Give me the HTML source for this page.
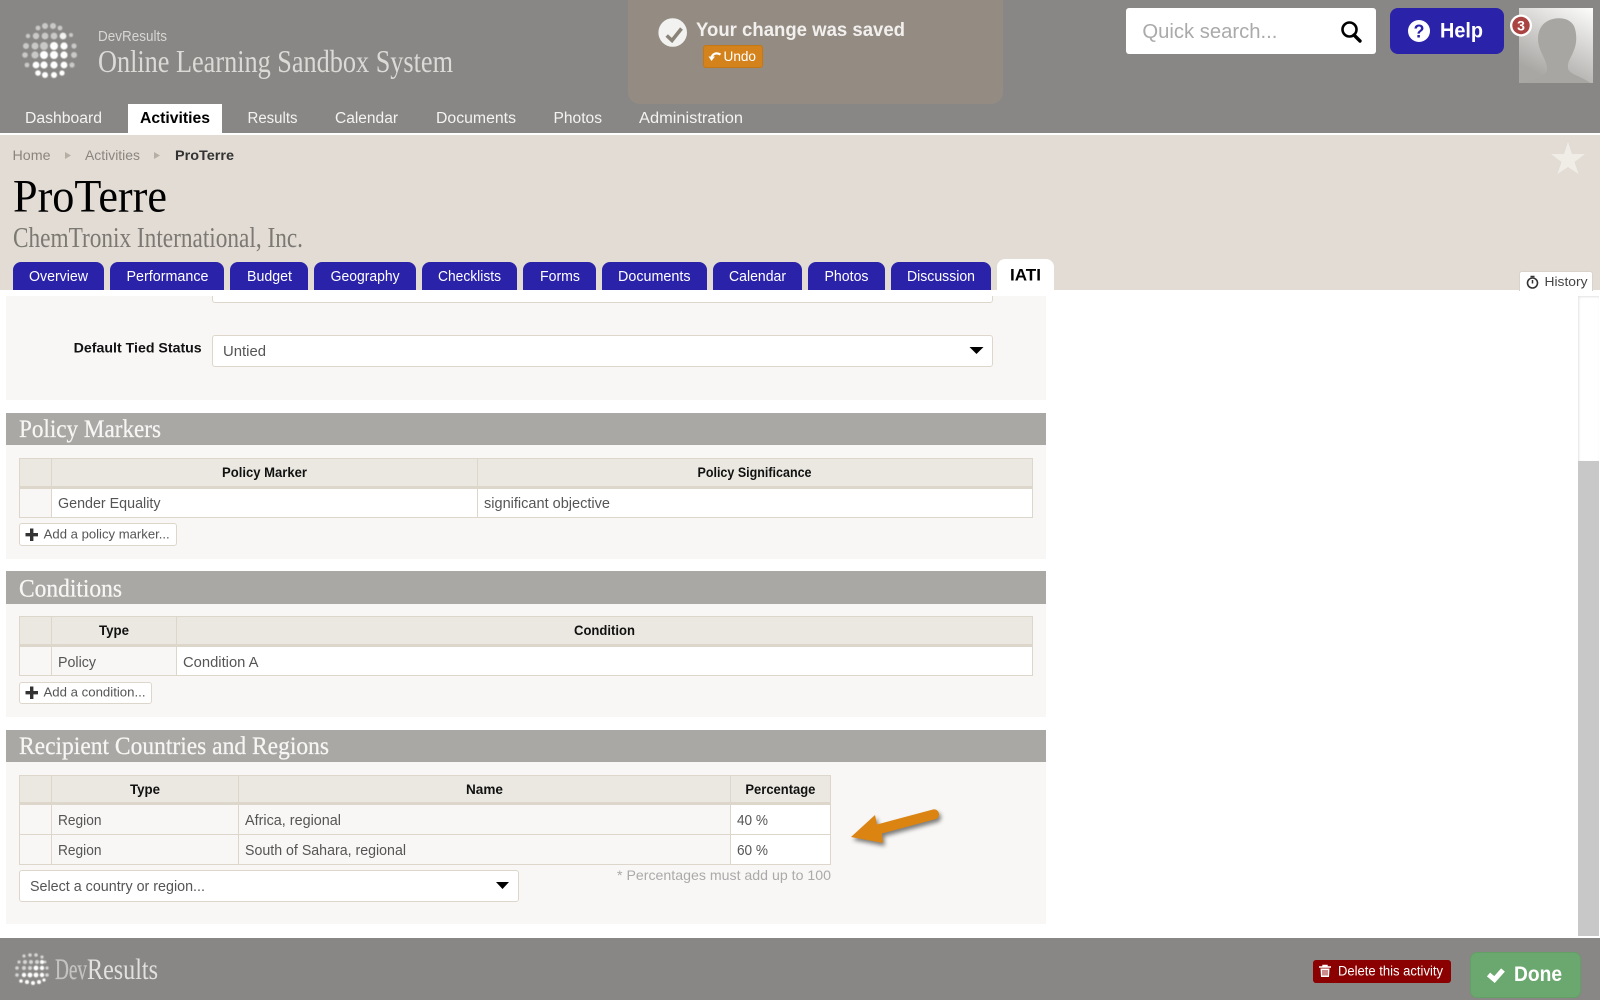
<!DOCTYPE html>
<html lang="en">
<head>
<meta charset="utf-8">
<title>ProTerre - DevResults</title>
<style>
html,body{margin:0;padding:0;background:#fff;}
body{position:relative;width:1601px;height:1000px;overflow:hidden;font-family:"Liberation Sans",sans-serif;}
.b{position:absolute;box-sizing:border-box;}
svg{position:absolute;left:0;top:0;}
text{font-family:"Liberation Sans",sans-serif;white-space:pre;}
.s{font-family:"Liberation Serif",serif;}
.w{font-weight:bold;}
.nav{font-size:15.5px;fill:#f4f3f1;}
.tab{font-size:15px;fill:#fff;}
.crumb{font-size:14px;fill:#8a857e;}
.sec{font-family:"Liberation Serif",serif;font-size:25px;fill:#f7f6f4;stroke:#f7f6f4;stroke-width:.25px;}
.th{font-size:13.5px;font-weight:bold;fill:#111;}
.td{font-size:14.5px;fill:#555;}
.add{font-size:13px;fill:#555;}
.line{background:#ddd6cb;}
</style>
</head>
<body>
<!-- header -->
<div class="b" style="left:0;top:0;width:1600px;height:133px;background:#888785"></div>
<div class="b" style="left:628px;top:0;width:375px;height:104px;background:#948c82;border-radius:0 0 12px 12px"></div>
<div class="b" style="left:128px;top:104px;width:94px;height:31px;background:#fff"></div>
<div class="b" style="left:1126px;top:8px;width:250px;height:46px;background:#fff;border-radius:3px"></div>
<div class="b" style="left:1390px;top:8px;width:114px;height:46px;background:#2a22a8;border-radius:8px"></div>
<div class="b" style="left:703px;top:45px;width:60px;height:23px;background:#d4831c;border:1px solid #c47815;border-radius:3px"></div>
<!-- sub header -->
<div class="b" style="left:0;top:135px;width:1600px;height:155px;background:#e2dcd5"></div>
<div class="b" style="left:13px;top:262px;width:91px;height:28px;background:#2a22a8;border-radius:8px 8px 0 0"></div>
<div class="b" style="left:110px;top:262px;width:114px;height:28px;background:#2a22a8;border-radius:8px 8px 0 0"></div>
<div class="b" style="left:230px;top:262px;width:78px;height:28px;background:#2a22a8;border-radius:8px 8px 0 0"></div>
<div class="b" style="left:314px;top:262px;width:102px;height:28px;background:#2a22a8;border-radius:8px 8px 0 0"></div>
<div class="b" style="left:422px;top:262px;width:95px;height:28px;background:#2a22a8;border-radius:8px 8px 0 0"></div>
<div class="b" style="left:523px;top:262px;width:73px;height:28px;background:#2a22a8;border-radius:8px 8px 0 0"></div>
<div class="b" style="left:602px;top:262px;width:105px;height:28px;background:#2a22a8;border-radius:8px 8px 0 0"></div>
<div class="b" style="left:713px;top:262px;width:89px;height:28px;background:#2a22a8;border-radius:8px 8px 0 0"></div>
<div class="b" style="left:808px;top:262px;width:77px;height:28px;background:#2a22a8;border-radius:8px 8px 0 0"></div>
<div class="b" style="left:891px;top:262px;width:100px;height:28px;background:#2a22a8;border-radius:8px 8px 0 0"></div>
<div class="b" style="left:997px;top:259px;width:57px;height:31px;background:#fff;border-radius:8px 8px 0 0"></div>
<div class="b" style="left:1519px;top:271px;width:74px;height:20px;background:#fff;border:1px solid #d8d3cb;border-bottom:0;border-radius:3px 3px 0 0"></div>
<!-- panels -->
<div class="b" style="left:6px;top:296px;width:1040px;height:104px;background:#f8f7f5"></div>
<div class="b" style="left:212px;top:290px;width:781px;height:13px;background:#fff;border:1px solid #ddd6cb;border-radius:0 0 3px 3px"></div>
<div class="b" style="left:0;top:290px;width:1060px;height:6px;background:#fff"></div>
<div class="b" style="left:212px;top:335px;width:781px;height:32px;background:#fff;border:1px solid #ddd6cb;border-radius:3px"></div>

<div class="b" style="left:6px;top:413px;width:1040px;height:32px;background:#a9a8a5"></div>
<div class="b" style="left:6px;top:445px;width:1040px;height:114px;background:#f8f7f5"></div>
<div class="b" style="left:19px;top:458px;width:1014px;height:31px;background:#ebe8e1;border:1px solid #ddd6cb;border-bottom:3px solid #ddd6cb"></div>
<div class="b" style="left:19px;top:489px;width:1014px;height:29px;background:#fff;border:1px solid #ddd6cb;border-top:0"></div>
<div class="b" style="left:20px;top:489px;width:31px;height:28px;background:#f8f7f5"></div>
<div class="b line" style="left:51px;top:458px;width:1px;height:59px"></div>
<div class="b line" style="left:477px;top:458px;width:1px;height:59px"></div>
<div class="b" style="left:19px;top:523px;width:158px;height:23px;background:#fff;border:1px solid #ddd6cb;border-radius:3px"></div>

<div class="b" style="left:6px;top:571px;width:1040px;height:33px;background:#a9a8a5"></div>
<div class="b" style="left:6px;top:604px;width:1040px;height:113px;background:#f8f7f5"></div>
<div class="b" style="left:19px;top:616px;width:1014px;height:31px;background:#ebe8e1;border:1px solid #ddd6cb;border-bottom:3px solid #ddd6cb"></div>
<div class="b" style="left:19px;top:647px;width:1014px;height:29px;background:#fff;border:1px solid #ddd6cb;border-top:0"></div>
<div class="b" style="left:20px;top:647px;width:31px;height:28px;background:#f8f7f5"></div>
<div class="b" style="left:52px;top:647px;width:124px;height:28px;background:#f8f7f5"></div>
<div class="b line" style="left:51px;top:616px;width:1px;height:59px"></div>
<div class="b line" style="left:176px;top:616px;width:1px;height:59px"></div>
<div class="b" style="left:19px;top:682px;width:133px;height:22px;background:#fff;border:1px solid #ddd6cb;border-radius:3px"></div>

<div class="b" style="left:6px;top:730px;width:1040px;height:32px;background:#a9a8a5"></div>
<div class="b" style="left:6px;top:762px;width:1040px;height:162px;background:#f8f7f5"></div>
<div class="b" style="left:19px;top:775px;width:812px;height:30px;background:#ebe8e1;border:1px solid #ddd6cb;border-bottom:3px solid #ddd6cb"></div>
<div class="b" style="left:19px;top:805px;width:812px;height:60px;border:1px solid #ddd6cb;border-top:0"></div>
<div class="b" style="left:731px;top:805px;width:99px;height:59px;background:#fff"></div>
<div class="b line" style="left:20px;top:834px;width:810px;height:1px"></div>
<div class="b line" style="left:51px;top:775px;width:1px;height:89px"></div>
<div class="b line" style="left:238px;top:775px;width:1px;height:89px"></div>
<div class="b line" style="left:730px;top:775px;width:1px;height:89px"></div>
<div class="b" style="left:19px;top:870px;width:500px;height:32px;background:#fff;border:1px solid #ddd6cb;border-radius:3px"></div>

<!-- scrollbar -->
<div class="b" style="left:1578px;top:296px;width:21px;height:640px;background:#c8c8c8"></div>
<div class="b" style="left:1578px;top:296px;width:21px;height:165px;background:#fff;box-shadow:inset 1px 1px 2px rgba(0,0,0,.12)"></div>

<!-- footer -->
<div class="b" style="left:0;top:938px;width:1600px;height:62px;background:#888785"></div>
<div class="b" style="left:1313px;top:960px;width:138px;height:23px;background:#8b0000;border-radius:3px"></div>
<div class="b" style="left:1470px;top:952px;width:111px;height:46px;background:#6ba86f;border:1px solid #62a066;border-radius:7px"></div>

<svg width="1601" height="1000" viewBox="0 0 1601 1000" xmlns="http://www.w3.org/2000/svg">
<defs>
<linearGradient id="av" x1="1" y1="0" x2="0.5" y2="1"><stop offset="0" stop-color="#fdfdfc"/><stop offset="1" stop-color="#a9a7a4"/></linearGradient>
<filter id="sh" x="-20%" y="-30%" width="140%" height="170%"><feGaussianBlur stdDeviation="2"/></filter>
<filter id="soft"><feGaussianBlur stdDeviation="0.4"/></filter>
</defs>

<!-- globe logo -->
<g fill="#fff" filter="url(#soft)">
<g opacity=".55"><circle cx="38" cy="28" r="2.4"/><circle cx="45" cy="26" r="3"/><circle cx="53" cy="26" r="3"/><circle cx="60" cy="28" r="2.4"/><circle cx="28" cy="36" r="2.2"/><circle cx="36" cy="36" r="3.2"/><circle cx="45" cy="36" r="3.4"/><circle cx="54" cy="36" r="3.4"/><circle cx="71" cy="35" r="2"/><circle cx="26" cy="46" r="3"/><circle cx="35" cy="46" r="3.5"/><circle cx="44" cy="46" r="4"/><circle cx="74" cy="46" r="2.6"/><circle cx="25" cy="55" r="2.8"/><circle cx="35" cy="55" r="3.6"/><circle cx="74" cy="55" r="3"/><circle cx="27" cy="65" r="2.4"/><circle cx="72" cy="65" r="2.6"/></g>
<circle cx="63" cy="36" r="3.4" opacity=".9"/>
<circle cx="54" cy="46" r="4"/><circle cx="64" cy="46" r="3.6"/>
<circle cx="44" cy="55" r="4"/><circle cx="54" cy="55" r="4"/><circle cx="64" cy="55" r="3.6"/>
<circle cx="36" cy="65" r="3.4"/><circle cx="44" cy="65" r="3.6"/><circle cx="54" cy="65" r="3.6"/><circle cx="64" cy="65" r="3.4"/>
<circle cx="38" cy="73" r="2.8"/><circle cx="45" cy="75" r="3"/><circle cx="54" cy="75" r="3"/><circle cx="62" cy="73" r="2.6"/>
</g>

<text x="98" y="41" font-size="14.5" fill="#d8d6d3" textLength="69" lengthAdjust="spacingAndGlyphs">DevResults</text>
<text class="s" x="98" y="72" font-size="32" fill="#dcdad6" textLength="355" lengthAdjust="spacingAndGlyphs">Online Learning Sandbox System</text>

<!-- nav -->
<text class="nav" x="25" y="123" textLength="77" lengthAdjust="spacingAndGlyphs">Dashboard</text>
<text class="nav w" x="140" y="123" style="fill:#000" textLength="70" lengthAdjust="spacingAndGlyphs">Activities</text>
<text class="nav" x="247.5" y="123" textLength="50" lengthAdjust="spacingAndGlyphs">Results</text>
<text class="nav" x="335" y="123" textLength="63" lengthAdjust="spacingAndGlyphs">Calendar</text>
<text class="nav" x="436" y="123" textLength="80" lengthAdjust="spacingAndGlyphs">Documents</text>
<text class="nav" x="553.5" y="123" textLength="48.5" lengthAdjust="spacingAndGlyphs">Photos</text>
<text class="nav" x="639" y="123" textLength="104" lengthAdjust="spacingAndGlyphs">Administration</text>

<!-- notification -->
<circle cx="672.7" cy="32.5" r="14.3" fill="#f2f2f0"/>
<path d="M666.7 35.5 L672 40.5 L681.5 28.5" fill="none" stroke="#8a8378" stroke-width="3.6"/>
<text class="w" x="696" y="36" font-size="19" fill="#f2f0ee" textLength="209" lengthAdjust="spacingAndGlyphs">Your change was saved</text>
<path d="M720.5 54.5 C716 52 712.5 54 711.5 57.5" fill="none" stroke="#fff" stroke-width="2.2"/>
<path d="M708.5 56.5 H715 L711.5 61 Z" fill="#fff"/>
<text x="723.5" y="61" font-size="13.5" fill="#fff" textLength="32.5" lengthAdjust="spacingAndGlyphs">Undo</text>

<!-- search/help/avatar -->
<text x="1142.4" y="38" font-size="20" fill="#aaa" textLength="135" lengthAdjust="spacingAndGlyphs">Quick search...</text>
<circle cx="1349.5" cy="29.5" r="7" fill="none" stroke="#000" stroke-width="2.6"/>
<path d="M1354 35 L1360 41" stroke="#000" stroke-width="3.4" stroke-linecap="round"/>
<circle cx="1419" cy="31" r="11" fill="#fff"/>
<text class="w" x="1419" y="37.5" font-size="18" fill="#2a22a8" text-anchor="middle">?</text>
<text class="w" x="1440" y="37.5" font-size="21" fill="#fff" textLength="43" lengthAdjust="spacingAndGlyphs">Help</text>
<rect x="1519" y="8" width="74" height="75" fill="url(#av)"/>
<path d="M1524 83 C1532 79 1546 77 1547 70 C1548 63 1541 54 1539 46 C1536 34 1540 22 1553 19 C1562 17 1570 19 1574 26 C1577 33 1577 43 1574 50 C1572 56 1567 62 1568 68 C1569 75 1582 76 1590 83 Z" fill="#a8a6a3"/>
<circle cx="1521" cy="25.5" r="11" fill="#fff"/>
<circle cx="1521" cy="25.5" r="8.7" fill="#a94442"/>
<text class="w" x="1521" y="30.5" font-size="14" fill="#fff" text-anchor="middle">3</text>

<!-- breadcrumb -->
<text class="crumb" x="12.5" y="160" textLength="38" lengthAdjust="spacingAndGlyphs">Home</text>
<path d="M65 152 L71 155.5 L65 159 Z" fill="#b5afa6"/>
<text class="crumb" x="85" y="160" textLength="55" lengthAdjust="spacingAndGlyphs">Activities</text>
<path d="M154 152 L160 155.5 L154 159 Z" fill="#b5afa6"/>
<text class="crumb w" x="175" y="160" style="fill:#333" textLength="59" lengthAdjust="spacingAndGlyphs">ProTerre</text>
<polygon points="1568,142 1572,154 1585,154 1574.5,162 1578.5,174 1568,167 1557.5,174 1561.5,162 1551,154 1564,154" fill="#f0ede7"/>

<text class="s" x="13" y="211.5" font-size="47" fill="#000" textLength="154" lengthAdjust="spacingAndGlyphs">ProTerre</text>
<text class="s" x="13" y="247" font-size="29" fill="#7c7872" textLength="290" lengthAdjust="spacingAndGlyphs">ChemTronix International, Inc.</text>

<!-- tabs -->
<text class="tab" x="29" y="281" textLength="59" lengthAdjust="spacingAndGlyphs">Overview</text>
<text class="tab" x="126.5" y="281" textLength="82" lengthAdjust="spacingAndGlyphs">Performance</text>
<text class="tab" x="247" y="281" textLength="45" lengthAdjust="spacingAndGlyphs">Budget</text>
<text class="tab" x="330.6" y="281" textLength="69" lengthAdjust="spacingAndGlyphs">Geography</text>
<text class="tab" x="438" y="281" textLength="63" lengthAdjust="spacingAndGlyphs">Checklists</text>
<text class="tab" x="540" y="281" textLength="40" lengthAdjust="spacingAndGlyphs">Forms</text>
<text class="tab" x="618" y="281" textLength="72.5" lengthAdjust="spacingAndGlyphs">Documents</text>
<text class="tab" x="729" y="281" textLength="57" lengthAdjust="spacingAndGlyphs">Calendar</text>
<text class="tab" x="824.5" y="281" textLength="44" lengthAdjust="spacingAndGlyphs">Photos</text>
<text class="tab" x="907" y="281" textLength="68" lengthAdjust="spacingAndGlyphs">Discussion</text>
<text class="w" x="1010" y="280.5" font-size="16.5" fill="#000" textLength="31" lengthAdjust="spacingAndGlyphs">IATI</text>

<!-- history -->
<circle cx="1532.5" cy="283" r="5" fill="none" stroke="#333" stroke-width="1.6"/>
<path d="M1530.5 276.5 H1534.5 M1532.5 280 V283.5" stroke="#333" stroke-width="1.5"/>
<text x="1544.5" y="286" font-size="13" fill="#444" textLength="43" lengthAdjust="spacingAndGlyphs">History</text>

<!-- default tied -->
<text class="w" x="73.7" y="352.5" font-size="14" fill="#111" textLength="128" lengthAdjust="spacingAndGlyphs">Default Tied Status</text>
<text class="td" x="223" y="356" textLength="43" lengthAdjust="spacingAndGlyphs">Untied</text>
<path d="M969.5 347 H983.5 L976.5 354 Z" fill="#000"/>

<!-- policy markers -->
<text class="sec" x="19" y="437" textLength="142" lengthAdjust="spacingAndGlyphs">Policy Markers</text>
<text class="th" x="222" y="477" textLength="85" lengthAdjust="spacingAndGlyphs">Policy Marker</text>
<text class="th" x="697.5" y="477" textLength="114" lengthAdjust="spacingAndGlyphs">Policy Significance</text>
<text class="td" x="58" y="508" textLength="102.5" lengthAdjust="spacingAndGlyphs">Gender Equality</text>
<text class="td" x="484" y="508" textLength="126" lengthAdjust="spacingAndGlyphs">significant objective</text>
<path d="M25.5 534.7 H38 M31.7 528.5 V541" stroke="#333" stroke-width="3.4"/>
<text class="add" x="43.7" y="538.7" textLength="126" lengthAdjust="spacingAndGlyphs">Add a policy marker...</text>

<!-- conditions -->
<text class="sec" x="19" y="596.5" textLength="103" lengthAdjust="spacingAndGlyphs">Conditions</text>
<text class="th" x="99" y="635" textLength="30" lengthAdjust="spacingAndGlyphs">Type</text>
<text class="th" x="574" y="635" textLength="61" lengthAdjust="spacingAndGlyphs">Condition</text>
<text class="td" x="58" y="667" textLength="38" lengthAdjust="spacingAndGlyphs">Policy</text>
<text class="td" x="183" y="667" textLength="75.5" lengthAdjust="spacingAndGlyphs">Condition A</text>
<path d="M25.5 692.7 H38 M31.7 686.5 V699" stroke="#333" stroke-width="3.4"/>
<text class="add" x="43.5" y="696.5" textLength="102" lengthAdjust="spacingAndGlyphs">Add a condition...</text>

<!-- recipient -->
<text class="sec" x="19" y="754" textLength="310" lengthAdjust="spacingAndGlyphs">Recipient Countries and Regions</text>
<text class="th" x="130" y="794" textLength="30" lengthAdjust="spacingAndGlyphs">Type</text>
<text class="th" x="466" y="794" textLength="37" lengthAdjust="spacingAndGlyphs">Name</text>
<text class="th" x="745.4" y="794" textLength="70" lengthAdjust="spacingAndGlyphs">Percentage</text>
<text class="td" x="58" y="825" textLength="43.5" lengthAdjust="spacingAndGlyphs">Region</text>
<text class="td" x="245" y="825" textLength="96" lengthAdjust="spacingAndGlyphs">Africa, regional</text>
<text class="td" x="737" y="825" textLength="31" lengthAdjust="spacingAndGlyphs">40 %</text>
<text class="td" x="58" y="855" textLength="43.5" lengthAdjust="spacingAndGlyphs">Region</text>
<text class="td" x="245" y="855" textLength="161" lengthAdjust="spacingAndGlyphs">South of Sahara, regional</text>
<text class="td" x="737" y="855" textLength="31" lengthAdjust="spacingAndGlyphs">60 %</text>
<text x="617" y="880" font-size="14" fill="#aaa" textLength="214" lengthAdjust="spacingAndGlyphs">* Percentages must add up to 100</text>
<text class="td" x="30" y="891" textLength="175" lengthAdjust="spacingAndGlyphs">Select a country or region...</text>
<path d="M496 882 H509 L502.5 889 Z" fill="#000"/>

<!-- arrow -->
<path d="M851 837 L875 815 L877 824.5 L933 809.5 A5 5 0 0 1 936 819 L882 833.5 L883 843 Z" fill="#000" opacity=".5" filter="url(#sh)" transform="translate(2,3)"/>
<path d="M851 837 L875 815 L877 824.5 L933 809.5 A5 5 0 0 1 936 819 L882 833.5 L883 843 Z" fill="#dc8412"/>

<!-- footer -->
<g filter="url(#soft)" fill="#fff">
<g opacity=".65"><circle cx="24" cy="956" r="1.6"/><circle cx="30" cy="955" r="1.8"/><circle cx="36" cy="955" r="1.8"/><circle cx="42" cy="957" r="1.6"/><circle cx="19" cy="962" r="1.6"/><circle cx="25" cy="962" r="2"/><circle cx="31" cy="962" r="2"/><circle cx="37" cy="962" r="2"/><circle cx="45" cy="962" r="1.4"/><circle cx="17" cy="968" r="1.8"/><circle cx="24" cy="968" r="2"/><circle cx="30" cy="968" r="2"/><circle cx="47" cy="968" r="1.6"/><circle cx="17" cy="975" r="1.8"/><circle cx="47" cy="975" r="1.8"/></g>
<circle cx="42" cy="962" r="2"/><circle cx="36" cy="968" r="2.4"/><circle cx="42" cy="968" r="2.2"/><circle cx="24" cy="975" r="2.2"/><circle cx="30" cy="975" r="2.4"/><circle cx="36" cy="975" r="2.4"/><circle cx="42" cy="975" r="2.2"/><circle cx="21" cy="981" r="1.8"/><circle cx="27" cy="982" r="2"/><circle cx="33" cy="983" r="2"/><circle cx="39" cy="982" r="2"/><circle cx="44" cy="980" r="1.6"/>
</g>
<text class="s" x="55" y="979" font-size="30" fill="#c4c3c1" stroke="#c4c3c1" stroke-width=".3" textLength="32" lengthAdjust="spacingAndGlyphs">Dev</text>
<text class="s" x="87" y="979" font-size="30" fill="#e2e1df" textLength="71" lengthAdjust="spacingAndGlyphs">Results</text>

<path d="M1319 967 H1331 M1323 967 V965.5 H1327 V967" fill="none" stroke="#fff" stroke-width="1.4"/>
<path d="M1320.5 968.5 H1329.5 L1329 977 H1321 Z" fill="#fff"/>
<path d="M1323 970 V975.5 M1325 970 V975.5 M1327 970 V975.5" stroke="#8b0000" stroke-width=".9"/>
<text x="1338" y="975.7" font-size="13.5" fill="#fff" textLength="105" lengthAdjust="spacingAndGlyphs">Delete this activity</text>

<path d="M1488.5 974.5 L1494.5 979.5 L1503 970" fill="none" stroke="#fff" stroke-width="5"/>
<text class="w" x="1514" y="981" font-size="21" fill="#fff" textLength="48" lengthAdjust="spacingAndGlyphs">Done</text>
</svg>
</body>
</html>
